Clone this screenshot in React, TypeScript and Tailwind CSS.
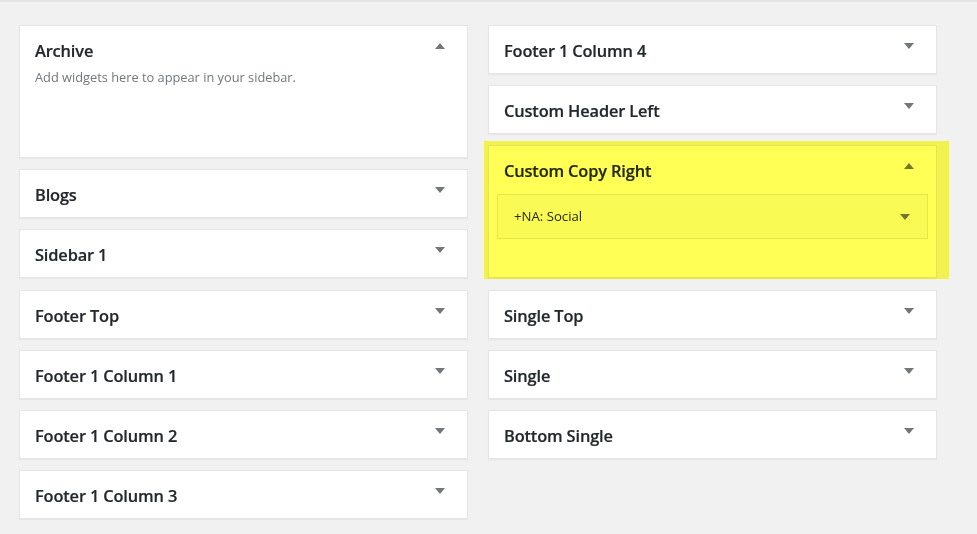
import { ReactNode } from "react";

const font = { fontFamily: '"Open Sans", "Noto Sans", Arial, sans-serif' };

const Arrow = ({ up }: { up?: boolean }) => (
  <svg width="10" height="6" viewBox="0 0 10 6" className="shrink-0">
    {up ? (
      <path d="M5 0 L10 6 L0 6 Z" fill="#72777c" />
    ) : (
      <path d="M0 0 L10 0 L5 6 Z" fill="#72777c" />
    )}
  </svg>
);

type CardProps = {
  title: string;
  open?: boolean;
  children?: ReactNode;
};

const SidebarCard = ({ title, open, children }: CardProps) => {
  return (
    <div
      className={`bg-white border border-[#e5e5e5] shadow-[0_1px_1px_rgba(0,0,0,0.04)] ${
        open ? "h-[133px]" : "h-[49px]"
      }`}
    >
      <div className="flex items-start justify-between pl-[15px] pr-[22px]">
        <h2 className="text-[16.4px] font-semibold text-[#23282d] leading-[20px] pt-[15px] tracking-[-0.15px] [-webkit-text-stroke:0.2px_#23282d]">
          {title}
        </h2>
        <div className="pt-[17px]">
          <Arrow up={open} />
        </div>
      </div>
      {children}
    </div>
  );
};

const left = ["Blogs", "Sidebar 1", "Footer Top", "Footer 1 Column 1", "Footer 1 Column 2", "Footer 1 Column 3"];
const rightBottom = ["Single Top", "Single", "Bottom Single"];

export default function App() {
  return (
    <div
      style={font}
      className="w-[977px] h-[534px] bg-[#f1f1f1] border-t-2 border-[#e4e4e4] overflow-hidden"
    >
      <div className="flex gap-[20px] pl-[19px] pt-[23px]">
        <div className="w-[449px] flex flex-col gap-[11.2px]">
          <SidebarCard title="Archive" open>
            <p className="px-[15px] pt-[7px] text-[12.8px] text-[#72777c] leading-[18px]">
              Add widgets here to appear in your sidebar.
            </p>
          </SidebarCard>
          {left.map((t) => (
            <SidebarCard key={t} title={t} />
          ))}
        </div>
        <div className="w-[449px] flex flex-col gap-[11.2px]">
          <SidebarCard title="Footer 1 Column 4" />
          <SidebarCard title="Custom Header Left" />
          <div className="relative">
            <SidebarCard title="Custom Copy Right" open>
              <div className="mx-[8px] mt-[13px] h-[45px] border border-[#e5e5e5] bg-[#fafafa] flex items-center justify-between pl-[16px] pr-[17px]">
                <span className="text-[13.2px] text-[#23282d]">+NA: Social</span>
                <Arrow />
              </div>
            </SidebarCard>
            <div className="absolute -left-[4px] -right-[12px] -top-[4px] -bottom-[1px] bg-[#ffff55] mix-blend-multiply pointer-events-none" />
          </div>
          {rightBottom.map((t) => (
            <SidebarCard key={t} title={t} />
          ))}
        </div>
      </div>
    </div>
  );
}
